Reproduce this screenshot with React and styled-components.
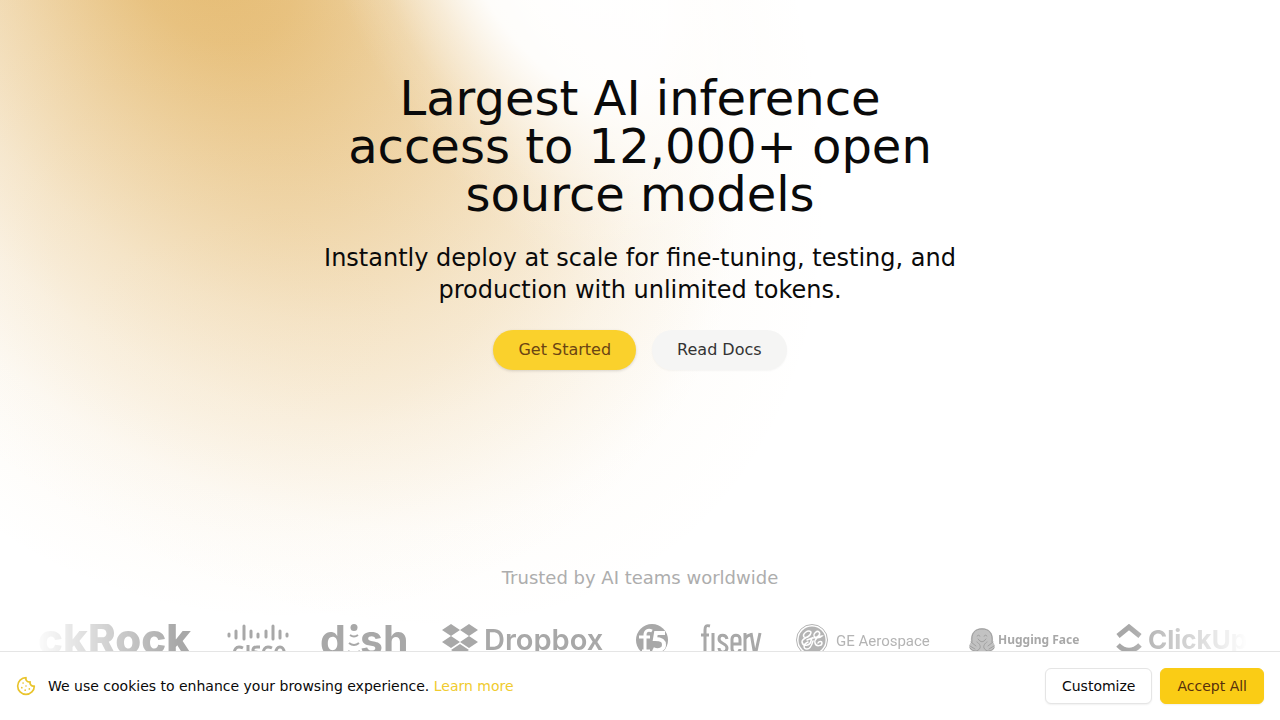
import React from 'react';
import styled, { createGlobalStyle } from 'styled-components';
import { Cookie } from 'lucide-react';

const GlobalStyle = createGlobalStyle`
  * {
    box-sizing: border-box;
  }

  body {
    margin: 0;
    background: #fff;
    color: #0a0a0a;
    font-family: "DejaVu Sans", sans-serif;
  }
`;

const Page = styled.main`
  position: relative;
  min-height: 100vh;
  overflow: hidden;
`;

const Glow = styled.svg`
  position: absolute;
  top: 0;
  left: 0;
  pointer-events: none;
`;

const Hero = styled.section`
  position: relative;
  display: flex;
  flex-direction: column;
  align-items: center;
  padding: 74px 16px 0;
  text-align: center;
`;

const Title = styled.h1`
  max-width: 640px;
  margin: 0;
  font-size: 48px;
  font-weight: 400;
  line-height: 48px;
`;

const Subtitle = styled.p`
  max-width: 672px;
  margin: 24px 0;
  font-size: 24px;
  line-height: 32px;
`;

const Actions = styled.div`
  display: flex;
  gap: 16px;
`;

const PillButton = styled.button`
  height: 40px;
  padding: 0 25px 2px;
  border: 0;
  border-radius: 20px;
  background: ${(props) => (props.$primary ? '#fad12c' : '#f5f5f4')};
  color: ${(props) => (props.$primary ? '#6a4413' : '#333')};
  font: inherit;
  font-size: 16px;
  box-shadow: ${(props) => (props.$primary ? '0 1px 3px rgba(0, 0, 0, 0.15)' : '0 1px 2px rgba(0, 0, 0, 0.04)')};
  cursor: pointer;
`;

const Trusted = styled.section`
  position: relative;
  padding: 194px 32px 0;
`;

const TrustedTitle = styled.h2`
  margin: 0 0 32px;
  color: #adadad;
  font-size: 18px;
  font-weight: 400;
  line-height: 28px;
  text-align: center;
`;

const LogoRow = styled.div`
  display: flex;
  justify-content: space-between;
  gap: 32px;
  height: 48px;
  mask-image: linear-gradient(to right, transparent, #000 12%, #000 90%, transparent);
`;

const Logo = styled.svg`
  flex: none;
  height: 48px;
  fill: #a8a8a8;
`;

const CookieBar = styled.aside`
  position: fixed;
  right: 0;
  bottom: 0;
  left: 0;
  display: flex;
  align-items: center;
  gap: 12px;
  padding: 16px;
  border-top: 1px solid #e5e5e5;
  background: #fff;
  font-size: 14px;
  line-height: 20px;
`;

const CookieText = styled.p`
  flex: 1;
  margin: 0;
`;

const LearnMore = styled.a`
  color: #f0cb2e;
  text-decoration: none;
`;

const CookieActions = styled.div`
  display: flex;
  gap: 8px;
`;

const BarButton = styled.button`
  height: 36px;
  padding: 0 16px;
  border: 1px solid ${(props) => (props.$primary ? '#facc15' : '#e5e5e5')};
  border-radius: 6px;
  background: ${(props) => (props.$primary ? '#facc15' : '#fff')};
  color: ${(props) => (props.$primary ? '#57300d' : '#0a0a0a')};
  font: inherit;
  font-size: 14px;
  box-shadow: 0 1px 2px rgba(0, 0, 0, 0.06);
  cursor: pointer;
`;

const BlackRock = () => (
  <Logo width="163" viewBox="0 0 163 48" role="img" aria-label="BlackRock">
    <text x="6" y="30" fontFamily="Inter, sans-serif" fontSize="42" fontWeight="800">ckRock</text>
  </Logo>
);

const Cisco = () => (
  <Logo width="62" viewBox="0 0 62 48" role="img" aria-label="Cisco">
    <path
      d="M2 10v2M9 7v7M17 2v13M24 7v6M31 10v3M39 7v6M46 2v13M53 7v7M60 10v2"
      fill="none"
      stroke="#a8a8a8"
      strokeWidth="3"
      strokeLinecap="round"
    />
    <path
      d="M16 24q-2-1-4-1c-6 0-6 10 0 10q2 0 4-1M21 21v14M33 23h-3c-5 0-5 5-2 5 5 0 5 5 0 5h-3M45 24q-2-1-4-1c-6 0-6 10 0 10q2 0 4-1"
      fill="none"
      stroke="#a8a8a8"
      strokeWidth="3"
    />
    <ellipse cx="53" cy="28" rx="4" ry="5" fill="none" stroke="#a8a8a8" strokeWidth="3" />
  </Logo>
);

const Dish = () => (
  <Logo width="88" viewBox="0 0 88 48" role="img" aria-label="dish">
    <g fontFamily="Inter, sans-serif" fontSize="41" fontWeight="700">
      <text x="-1" y="31">d</text>
      <text x="39" y="31">sh</text>
    </g>
    <circle cx="33" cy="3.500" r="3.500" />
    <path d="M29 11q4 3 8 0M28 19q5 4 10 0M27 27q6 4 12 0" fill="none" stroke="#a8a8a8" strokeWidth="2" />
  </Logo>
);

const Dropbox = () => (
  <Logo width="163" viewBox="0 0 163 48" role="img" aria-label="Dropbox">
    <path d="M10 0l9 6-9 6-9-6zM28 0l9 6-9 6-9-6zM10 12l9 6-9 6-9-6zM28 12l9 6-9 6-9-6zM19 20l9 6-9 6-9-6z" />
    <text x="43" y="26" fontFamily="Inter, sans-serif" fontSize="29" fontWeight="600">Dropbox</text>
  </Logo>
);

const F5 = () => (
  <Logo width="33" viewBox="0 0 33 48" role="img" aria-label="F5">
    <circle cx="16" cy="16" r="16" />
    <path d="M16 7c-4-2-7 0-7 4v16M3 13h11M6 27h8" fill="none" stroke="#fff" strokeWidth="3" />
    <path d="M29 9h-9l-1 6c7 0 9 2 9 6s-5 7-11 4" fill="none" stroke="#fff" strokeWidth="4" />
  </Logo>
);

const Fiserv = () => (
  <Logo width="61" viewBox="0 0 61 48" role="img" aria-label="fiserv">
    <path
      d="M9 2c-4-1-5 0-5 4v28M0 11h8M12 9v25M26 15c-1-5-8-5-8 0s8 4 8 9-8 6-8 0M31 20h8v-5c0-5-8-5-8 0v10c0 5 8 5 8 0M44 9v25M44 15q2-4 6-4M50 9l4 23 5-23"
      fill="none"
      stroke="#a8a8a8"
      strokeWidth="3"
    />
  </Logo>
);

const GeAerospace = () => (
  <Logo width="142" viewBox="0 0 142 48" role="img" aria-label="GE Aerospace">
    <circle cx="18" cy="16" r="15.500" fill="none" stroke="#b4b4b4" />
    <circle cx="18" cy="16" r="13.500" fill="#b4b4b4" />
    <path
      d="M17 8c-3-3-9 2-7 5 3 2 7-2 7-5 0 6-9 5-9 10 1 5 8 4 9-1l1-3-5 2M19 14c5 0 8-4 6-6s-6 2-5 4c1 3 6 2 8 0-3 0-8 3-7 7 1 4 7 3 7 0 0-2-3-2-4 0M14 18c-5 2-5 7-1 7s5-5 6-8"
      fill="none"
      stroke="#fff"
      strokeWidth="1.500"
      strokeLinecap="round"
    />
    <text x="42" y="22" fill="#b4b4b4" fontFamily="Roboto, sans-serif" fontSize="15">GE Aerospace</text>
  </Logo>
);

const HuggingFace = () => (
  <Logo width="112" viewBox="0 0 112 48" role="img" aria-label="Hugging Face">
    <path d="M3 18C2 9 7 4 14 4s12 5 11 14c3 4 2 8-2 9H5c-4-1-5-5-2-9z" fill="#c2c2c2" />
    <path
      d="M4 18C3 9 7 5 14 5s11 4 10 13M9 12q1-2 3 0M16 12q2-2 3 0M10 15q4 6 8 0M3 18l5 4M2 22l5 3M25 18l-5 4M26 22l-5 3M2 24c3 4 8 4 10 0 1-2-1-5-3-6M26 24c-3 4-8 4-10 0-1-2 1-5 3-6"
      fill="none"
      stroke="#a0a0a0"
      strokeLinecap="round"
    />
    <text x="30" y="20" fontFamily='"Noto Sans", sans-serif' fontSize="12" fontWeight="700">Hugging Face</text>
  </Logo>
);

const ClickUp = () => (
  <Logo width="136" viewBox="0 0 136 48" role="img" aria-label="ClickUp">
    <path d="M6 12 17 3l11 9M6 21q11 11 22 0" fill="none" stroke="#a8a8a8" strokeWidth="5" />
    <text x="36" y="25" fontFamily="Inter, sans-serif" fontSize="26" fontWeight="700">ClickUp</text>
  </Logo>
);

const Background = () => (
  <Glow width="1280" height="720" viewBox="0 0 1280 720" aria-hidden="true">
    <defs>
      <radialGradient id="amber">
        <stop offset="0" stopColor="#dda544" stopOpacity=".74" />
        <stop offset=".15" stopColor="#dda544" stopOpacity=".65" />
        <stop offset=".37" stopColor="#dda544" stopOpacity=".4" />
        <stop offset=".55" stopColor="#dda544" stopOpacity=".21" />
        <stop offset=".7" stopColor="#dda544" stopOpacity=".09" />
        <stop offset=".85" stopColor="#dda544" stopOpacity=".02" />
        <stop offset="1" stopColor="#dda544" stopOpacity="0" />
      </radialGradient>
      <radialGradient id="haze">
        <stop offset="0" stopColor="#dda544" stopOpacity=".15" />
        <stop offset=".5" stopColor="#dda544" stopOpacity=".1" />
        <stop offset=".8" stopColor="#dda544" stopOpacity=".03" />
        <stop offset="1" stopColor="#dda544" stopOpacity="0" />
      </radialGradient>
      <radialGradient id="fade">
        <stop offset="0" stopColor="#fff" />
        <stop offset=".4" stopColor="#fff" stopOpacity=".92" />
        <stop offset=".6" stopColor="#fff" stopOpacity=".5" />
        <stop offset=".8" stopColor="#fff" stopOpacity=".15" />
        <stop offset="1" stopColor="#fff" stopOpacity="0" />
      </radialGradient>
    </defs>
    <ellipse cx="200" cy="-60" rx="780" ry="520" fill="url(#amber)" transform="rotate(52 200 -60)" />
    <ellipse cx="280" cy="220" rx="460" ry="400" fill="url(#haze)" />
    <ellipse cx="560" cy="-50" rx="380" ry="220" fill="url(#fade)" transform="rotate(62 560 -50)" />
  </Glow>
);

const App = () => (
  <>
    <GlobalStyle />
    <Page>
      <Background />
      <Hero>
        <Title>Largest AI inference access to 12,000+ open source models</Title>
        <Subtitle>
          Instantly deploy at scale for fine-tuning, testing, and production with unlimited tokens.
        </Subtitle>
        <Actions>
          <PillButton $primary>Get Started</PillButton>
          <PillButton>Read Docs</PillButton>
        </Actions>
      </Hero>
      <Trusted>
        <TrustedTitle>Trusted by AI teams worldwide</TrustedTitle>
        <LogoRow>
          <BlackRock />
          <Cisco />
          <Dish />
          <Dropbox />
          <F5 />
          <Fiserv />
          <GeAerospace />
          <HuggingFace />
          <ClickUp />
        </LogoRow>
      </Trusted>
    </Page>
    <CookieBar aria-label="Cookie consent">
      <Cookie size={20} color="#e9c42c" />
      <CookieText>
        We use cookies to enhance your browsing experience. <LearnMore href="#cookies">Learn more</LearnMore>
      </CookieText>
      <CookieActions>
        <BarButton>Customize</BarButton>
        <BarButton $primary>Accept All</BarButton>
      </CookieActions>
    </CookieBar>
  </>
);

export default App;
